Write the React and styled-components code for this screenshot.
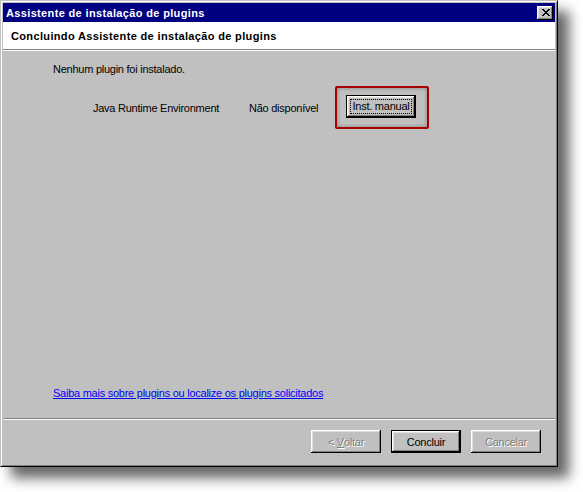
import React from 'react';
import styled, { createGlobalStyle, css } from 'styled-components';

const GlobalStyle = createGlobalStyle`
  html, body {
    margin: 0;
    padding: 0;
    background: #fff;
  }
  body {
    font-family: "Liberation Sans", Arial, sans-serif;
    font-size: 11px;
    letter-spacing: -0.25px;
    color: #000;
  }
`;

const Desktop = styled.div`
  width: 583px;
  height: 492px;
  background: #fff;
  overflow: hidden;
`;

const Window = styled.div`
  box-sizing: border-box;
  width: 558px;
  height: 467px;
  display: flex;
  flex-direction: column;
  padding: 2px;
  background: #c0c0c0;
  border: 1px solid;
  border-color: #c0c0c0 #000 #000 #c0c0c0;
  box-shadow: inset 1px 1px 0 #fff, inset -1px -1px 0 #808080,
    11px 11px 12px rgba(0, 0, 0, 0.6);
`;

const TitleBar = styled.div`
  height: 19px;
  flex: none;
  display: flex;
  align-items: center;
  justify-content: space-between;
  padding: 0 2px 0 3px;
  background: #000080;
  color: #fff;
  font-weight: bold;
  letter-spacing: 0.35px;
`;

const bevel = css`
  box-shadow: inset -1px -1px 0 #000, inset 1px 1px 0 #fff,
    inset -2px -2px 0 #808080, inset 2px 2px 0 #dfdfdf;
`;

const CloseButton = styled.div`
  box-sizing: border-box;
  width: 16px;
  height: 14px;
  display: flex;
  align-items: center;
  justify-content: center;
  padding-left: 1px;
  background: #c0c0c0;
  ${bevel}
`;

const Header = styled.div`
  height: 27px;
  flex: none;
  display: flex;
  align-items: center;
  padding-left: 8px;
  background: #fff;
  font-weight: bold;
  letter-spacing: 0.35px;
  border-bottom: 1px solid #808080;
  box-shadow: 0 1px 0 #fff;
  margin-bottom: 1px;
`;

const Body = styled.div`
  flex: 1;
  display: flex;
  flex-direction: column;
  padding: 12px 0 18px 50px;
  line-height: 13px;
`;

const Message = styled.div`
  margin-bottom: 10px;
`;

const PluginRow = styled.div`
  display: flex;
  align-items: center;
  padding-left: 40px;
`;

const Cell = styled.div`
  flex: none;
  width: ${(p) => p.$width}px;
  padding-top: 2px;
`;

const Highlight = styled.div`
  box-sizing: border-box;
  width: 94px;
  height: 43px;
  padding: 7px 0 0 9px;
  border: 2px solid #a80000;
  border-radius: 2px;
  box-shadow: inset 0 0 4px rgba(0, 0, 0, 0.35);
`;

const Link = styled.a`
  margin-top: auto;
  align-self: flex-start;
  color: #0000ff;
  text-decoration: underline;
  cursor: pointer;
`;

const Footer = styled.div`
  height: 46px;
  flex: none;
  display: flex;
  justify-content: flex-end;
  align-items: flex-start;
  gap: 10px;
  padding: 11px 14px 0 0;
  margin-left: 1px;
  border-top: 1px solid #808080;
  box-shadow: inset 0 1px 0 #fff;
  box-sizing: border-box;
`;

const Button = styled.div`
  box-sizing: border-box;
  width: 70px;
  height: 23px;
  display: flex;
  align-items: center;
  justify-content: center;
  white-space: nowrap;
  background: #c0c0c0;
  color: ${(p) => (p.$disabled ? '#808080' : '#000')};
  text-shadow: ${(p) => (p.$disabled ? '1px 1px 0 #fff' : 'none')};
  ${(p) =>
    p.$default
      ? css`
          border: 1px solid #000;
          box-shadow: inset -1px -1px 0 #000, inset 1px 1px 0 #fff,
            inset -2px -2px 0 #808080, inset 2px 2px 0 #dfdfdf;
        `
      : bevel}
`;

const FocusRing = styled.span`
  display: flex;
  align-items: center;
  justify-content: center;
  width: 62px;
  height: 15px;
  border: 1px dotted #000;
  box-sizing: border-box;
  white-space: nowrap;
`;

const CloseIcon = () => (
  <svg width="8" height="7" viewBox="0 0 8 7" shapeRendering="crispEdges">
    <path
      fill="#000"
      d="M0 0h2v1H0zM6 0h2v1H6zM1 1h2v1H1zM5 1h2v1H5zM2 2h4v1H2zM3 3h2v1H3zM2 4h4v1H2zM1 5h2v1H1zM5 5h2v1H5zM0 6h2v1H0zM6 6h2v1H6z"
    />
  </svg>
);

const App = () => {
  return (
    <>
      <GlobalStyle />
      <Desktop>
        <Window>
          <TitleBar>
            <span>Assistente de instalação de plugins</span>
            <CloseButton>
              <CloseIcon />
            </CloseButton>
          </TitleBar>
          <Header>Concluindo Assistente de instalação de plugins</Header>
          <Body>
            <Message>Nenhum plugin foi instalado.</Message>
            <PluginRow>
              <Cell $width={156}>Java Runtime Environment</Cell>
              <Cell $width={86}>Não disponível</Cell>
              <Highlight>
                <Button $default>
                  <FocusRing>Inst. manual</FocusRing>
                </Button>
              </Highlight>
            </PluginRow>
            <Link>Saiba mais sobre plugins ou localize os plugins solicitados</Link>
          </Body>
          <Footer>
            <Button $disabled>
              &lt;&nbsp;<u>V</u>oltar
            </Button>
            <Button $default>Concluir</Button>
            <Button $disabled>Cancelar</Button>
          </Footer>
        </Window>
      </Desktop>
    </>
  );
};

export default App;
